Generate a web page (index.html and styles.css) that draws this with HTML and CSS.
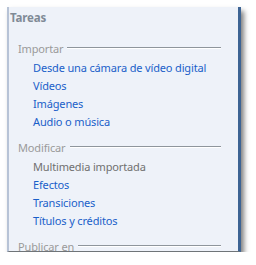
FILE: index.html
```html
<!DOCTYPE html>
<html lang="es">
<head>
<meta charset="UTF-8" />
<title>Tareas</title>
<link rel="stylesheet" href="styles.css">
</head>
<body>

<div class="panel">
  <div class="title">Tareas</div>

  <div class="group">
    <div class="group-head"><span>Importar</span><i class="rule"></i></div>
    <a class="task">Desde una cámara de vídeo digital</a>
    <a class="task">Vídeos</a>
    <a class="task">Imágenes</a>
    <a class="task">Audio o música</a>
  </div>

  <div class="group">
    <div class="group-head"><span>Modificar</span><i class="rule"></i></div>
    <a class="task muted">Multimedia importada</a>
    <a class="task">Efectos</a>
    <a class="task">Transiciones</a>
    <a class="task">Títulos y créditos</a>
  </div>

  <div class="group">
    <div class="group-head"><span>Publicar en</span><i class="rule"></i></div>
  </div>
</div>

</body>
</html>
```

FILE: styles.css
```css
body {
  margin: 0;
  background: #fff;
  font-family: 'Noto Sans', 'Open Sans', sans-serif;
  font-size: 11px;
  letter-spacing: -0.15px;
}
.panel {
  margin: 7px 0 0 7px;
  width: 229px;
  height: 244px;
  overflow: hidden;
  background: #eef2f9;
  border-left: 2px solid #b7c3d6;
  border-right: 3px solid #3d6494;
  border-bottom: 1px solid #6f7478;
  box-shadow: 3px 4px 5px rgba(0,0,0,0.5);
}
.title {
  padding: 2px 0 0 1px;
  height: 18px;
  line-height: 18px;
  font-size: 11.5px;
  font-weight: 700;
  color: #808a96;
}
.group {
  display: flex;
  flex-direction: column;
  padding-left: 9px;
  margin-top: 12px;
}
.group + .group {
  margin-top: 7px;
}
.group-head {
  display: flex;
  align-items: center;
  height: 18px;
  color: #9a9a9a;
  margin-bottom: 2px;
}
.rule {
  flex: 1;
  margin: 0 17px 0 4px;
  height: 1px;
  background: #8e959c;
  border-bottom: 1px solid #fff;
}
.task {
  display: block;
  padding-left: 15px;
  height: 18px;
  line-height: 18px;
  color: #1a5fc9;
}
.task.muted {
  color: #707070;
}
```
